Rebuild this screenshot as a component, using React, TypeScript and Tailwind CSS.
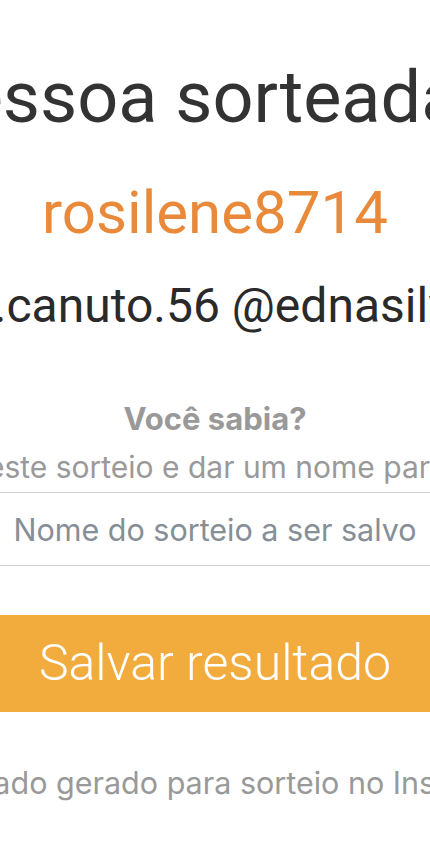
export default function App() {
  return (
    <div className="min-h-[858px] w-full overflow-hidden bg-white">
      <div className="flex flex-col items-center pt-[55px]">
        {/* título */}
        <h1 className="whitespace-nowrap pr-[50px] font-['Roboto',sans-serif] text-[72px] font-normal leading-[86px] text-[#333333]">
          Pessoa sorteada
        </h1>

        <div className="mt-[36px] whitespace-nowrap font-['Roboto',sans-serif] text-[60px] leading-[72px] text-[#e98a3b]">
          rosilene8714
        </div>

        <div className="mt-[28px] whitespace-nowrap font-['Roboto',sans-serif] text-[48px] leading-[58px] text-[#2a2a2a]">
          @ana.canuto.56 @ednasilva199
        </div>

        {/* dica */}
        <div className="mt-[66px] whitespace-nowrap font-['Inter',sans-serif] text-[31px] font-bold leading-[36px] text-[#999999]">
          Você sabia?
        </div>
        <div className="mt-[10px] whitespace-nowrap pr-[6px] font-['Inter',sans-serif] text-[30px] leading-[40px] text-[#999999]">
          Você pode salvar este sorteio e dar um nome para consultar depois
        </div>

        <input
          type="text"
          placeholder="Nome do sorteio a ser salvo"
          className="mt-[5px] h-[74px] w-[560px] shrink-0 border border-[#ced4da] bg-white text-center font-['Inter',sans-serif] text-[30.5px] text-[#495057] outline-none placeholder:text-[#868e96]"
        />

        <button className="mt-[49px] h-[97px] w-[560px] shrink-0 bg-[#f2ac3e] font-['Roboto',sans-serif] text-[50px] font-light text-white">
          Salvar resultado
        </button>

        <p className="mt-[51px] whitespace-nowrap pr-[6px] font-['Inter',sans-serif] text-[30.5px] leading-[40px] text-[#999999]">
          Certificado gerado para sorteio no Instagram
        </p>
      </div>
    </div>
  );
}
